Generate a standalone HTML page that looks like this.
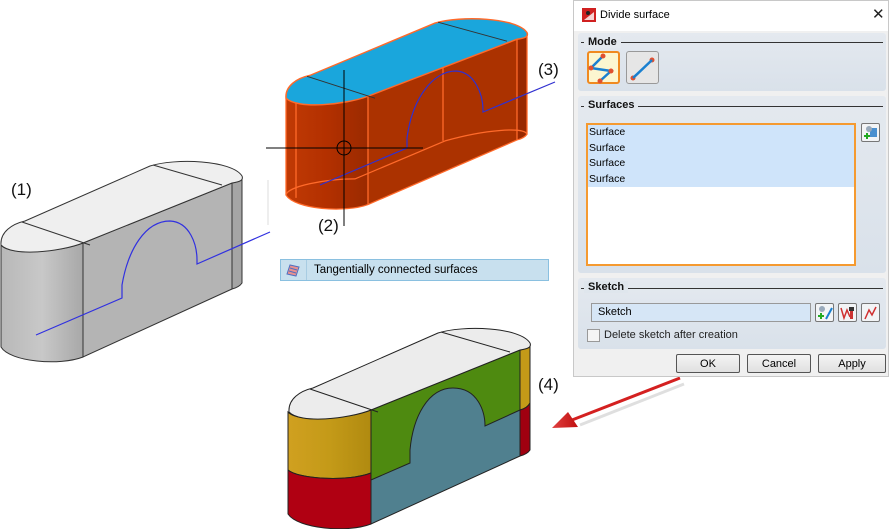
<!DOCTYPE html>
<html><head><meta charset="utf-8"><style>
body{margin:0;width:892px;height:529px;background:#fff;position:relative;overflow:hidden;font-family:"Liberation Sans",sans-serif;}
.a{position:absolute}
.lbl{font-size:17px;color:#111}
.dlg{left:573px;top:0;width:316px;height:377px;background:#f0f0f0;border:1px solid #c8c8c8;box-sizing:border-box}
.pan{position:absolute;left:4px;width:308px;background:linear-gradient(#e4e9ef,#d9e1ea);border-radius:3px}
.ph{position:absolute;left:4px;top:3px;font-size:11px;font-weight:bold;color:#111;background:inherit}
.hl{position:absolute;height:1px;background:#333}
.btn{position:absolute;top:353px;height:19px;border:1px solid #555;border-radius:2px;background:linear-gradient(#f4f4f4,#e0e0e0);font-size:11px;text-align:center;line-height:19px;box-sizing:border-box}
.ib{position:absolute;width:19px;height:19px;border:1px solid #777;border-radius:2px;background:#f2f4f6;box-sizing:border-box}
.it{height:15.5px;line-height:15.5px;font-size:10.5px;padding-left:1px;background:#cfe4fa}
</style></head><body>
<svg class="a" style="left:0;top:0" width="892" height="529">
<defs>
<linearGradient id="gc" x1="0" x2="1"><stop offset="0" stop-color="#b8b8b8"/><stop offset=".5" stop-color="#c8c8c8"/><stop offset="1" stop-color="#a8a8a8"/></linearGradient>
<linearGradient id="oc" x1="0" x2="1"><stop offset="0" stop-color="#c03a05"/><stop offset=".5" stop-color="#b33000"/><stop offset="1" stop-color="#9a2a00"/></linearGradient>
<linearGradient id="yc" x1="0" x2="1"><stop offset="0" stop-color="#d0a020"/><stop offset=".5" stop-color="#c49a18"/><stop offset="1" stop-color="#b08a10"/></linearGradient>
<linearGradient id="ar" x1="0" x2="1"><stop offset="0" stop-color="#e04040"/><stop offset="1" stop-color="#c01010"/></linearGradient>
<g id="top"><path d="M1,245 C0,232 12,224 25,221 L150,166 C175,158 232,160 242,176 C244,181 238,182 232,183 L83,243 C60,252 12,257 1,245 Z"/></g>
</defs>
<!-- gray shape -->
<g stroke="#333" stroke-width="1">
<path d="M1,245 C10,256 60,252 83,243 L83,357 C60,366 10,362 1,347 Z" fill="url(#gc)"/>
<path d="M83,243 L232,183 L232,289 L83,357 Z" fill="#b4b4b4"/>
<path d="M232,183 C238,182 243,180 242,176 L242,283 C240,286 236,288 232,289 Z" fill="#a5a5a5"/>
<use href="#top" fill="#efefef"/>
<path d="M22,222 L90,245 M153,165 L222,185" fill="none"/>
</g>
<path d="M36,335 L122,298 L122,285 C128,250 145,221 170,221 C190,222 197,245 197,260 L197,264 L270,232" fill="none" stroke="#3030e0" stroke-width="1.2"/>
<!-- orange shape -->
<g transform="translate(285,-146) scale(1,0.95)">
<g transform="translate(0,12)">
<path d="M1,245 C10,256 60,252 83,243 L83,357 C60,366 10,362 1,347 Z" fill="url(#oc)"/>
<path d="M83,243 L232,183 L232,289 L83,357 Z" fill="#ab3200"/>
<path d="M232,183 C238,182 243,180 242,176 L242,283 C240,286 236,288 232,289 Z" fill="#982800"/>
<path d="M1,347 C2,338 40,330 70,330 L160,290 C200,278 240,275 242,283" fill="none" stroke="#ff6a2a" stroke-width="1.3"/>
<path d="M1,245 L1,347 C10,362 60,366 83,357 L232,289 C236,288 240,286 242,283 L242,176 M83,243 L83,357 M232,183 L232,289 M11,235 L11,350 M158,164 L158,290" fill="none" stroke="#ff6a2a" stroke-width="1.3"/>
<use href="#top" fill="#1aa6dc" stroke="#ff6a2a" stroke-width="1.5"/>
<path d="M22,222 L90,245 M153,165 L222,185" stroke="#333" fill="none"/>
</g></g>
<path d="M320,185 L407,148 L407,138 C412,100 432,71 456,71 C475,72 483,95 483,110 L483,112 L555,82" fill="none" stroke="#3030d0" stroke-width="1.2"/>
<!-- crosshair -->
<path d="M266,148 L423,148 M344,70 L344,226" stroke="#000" stroke-width="1"/>
<circle cx="344" cy="148" r="7" fill="none" stroke="#000"/>
<!-- colored shape -->
<g transform="translate(288,167)" stroke="#222" stroke-width="1">
<path d="M0,245 C10,256 60,252 83,243 L83,306 C60,315 10,312 0,303 Z" fill="url(#yc)"/>
<path d="M0,303 C10,312 60,315 83,306 L83,357 C60,366 10,362 0,347 Z" fill="#b00012"/>
<path d="M83,243 L232,183 L232,289 L83,357 Z" fill="#50808f"/>
<path d="M83,243 L232,183 L232,243 L197,259 C197,245 190,221 165,221 C140,221 125,250 122,283 L122,296 L83,313 Z" fill="#4e8a10"/>
<path d="M232,183 C238,182 243,180 242,176 L242,236 C240,240 236,242 232,243 Z" fill="#c49a18"/>
<path d="M232,243 C236,242 240,240 242,236 L242,283 C240,286 236,288 232,289 Z" fill="#a00010"/>
<use href="#top" fill="#ececec"/>
<path d="M22,222 L90,245 M153,165 L222,185" fill="none"/>
</g>
<!-- arrow -->
<path d="M682,381 L578,422" stroke="#999" stroke-width="3" opacity=".3" transform="translate(2,3)"/>
<path d="M680,378 L572,420" stroke="#d42020" stroke-width="3"/>
<path d="M552,428 L568,412 L578,427 Z" fill="url(#ar)"/>
<path d="M268,180 L268,225" stroke="#ddd"/>
</svg>
<div class="a lbl" style="left:11px;top:180px">(1)</div>
<div class="a lbl" style="left:318px;top:216px">(2)</div>
<div class="a lbl" style="left:538px;top:60px">(3)</div>
<div class="a lbl" style="left:538px;top:375px">(4)</div>
<div class="a" style="left:280px;top:259px;width:269px;height:22px;background:#c8e0ee;border:1px solid #8ac0e0;box-sizing:border-box;font-size:11.5px;line-height:20px;padding-left:33px">Tangentially connected surfaces
<svg class="a" style="left:4px;top:3px" width="16" height="14"><path d="M2,11 L5,2 L14,4 L11,13 Z" fill="#e89090" stroke="#5070c0"/><path d="M5,5 L12,7 M4,8 L11,10" stroke="#5070c0"/></svg>
<div class="a" style="left:25px;top:0;width:1px;height:20px;background:#a8cce2"></div></div>

<div class="a dlg">
<div class="a" style="left:0;top:0;width:314px;height:30px;background:#fff"></div>
<svg class="a" style="left:8px;top:7px" width="14" height="14"><rect width="14" height="14" fill="#d02020"/><path d="M2,12 L12,4 L12,12 Z" fill="#fff" opacity=".8"/><circle cx="6" cy="5" r="2" fill="#222"/></svg>
<div class="a" style="left:26px;top:8px;font-size:11px">Divide surface</div>
<div class="a" style="left:298px;top:4px;font-size:15px;color:#222">✕</div>
<div class="pan" style="top:32px;height:58px">
<div class="hl" style="left:3px;right:3px;top:9px"></div><div class="ph" style="padding:0 4px;left:6px;background:#e4e9ef">Mode</div>
<div class="a" style="left:9px;top:18px;width:33px;height:33px;border:2px solid #f08a20;border-radius:3px;background:#fcf6d0;box-sizing:border-box"></div>
<div class="a" style="left:48px;top:18px;width:33px;height:33px;border:1px solid #999;border-radius:3px;background:#e6e6e6;box-sizing:border-box"></div>
<svg class="a" style="left:0;top:0" width="100" height="58"><path d="M25,23 L13,35 L33,38 L22,48" fill="none" stroke="#1a80d0" stroke-width="2.5"/><g fill="#e05030"><circle cx="25" cy="23" r="2.5"/><circle cx="13" cy="35" r="2.5"/><circle cx="33" cy="38" r="2.5"/><circle cx="22" cy="48" r="2.5"/><circle cx="74" cy="27" r="2.5"/><circle cx="55" cy="45" r="2.5"/></g><path d="M74,27 L55,45" stroke="#1a80d0" stroke-width="2.5"/></svg>
</div>
<div class="pan" style="top:95px;height:177px">
<div class="hl" style="left:3px;right:3px;top:10px"></div><div class="ph" style="padding:0 4px;left:6px;background:#e3e8ee">Surfaces</div>
<div class="a" style="left:8px;top:27px;width:270px;height:143px;border:2px solid #f59a30;background:#fff;box-sizing:border-box"><div class="it">Surface</div><div class="it">Surface</div><div class="it">Surface</div><div class="it">Surface</div></div>
<div class="ib" style="left:283px;top:27px"><svg width="17" height="17"><rect x="8" y="4" width="7" height="9" fill="#4a90d0"/><circle cx="7" cy="5" r="3" fill="#9ab"/><path d="M5,9 L5,15 M2,12 L8,12" stroke="#2a2" stroke-width="2"/></svg></div>
</div>
<div class="pan" style="top:277px;height:71px">
<div class="hl" style="left:3px;right:3px;top:10px"></div><div class="ph" style="padding:0 4px;left:6px;background:#dfe6ed">Sketch</div>
<div class="a" style="left:13px;top:25px;width:220px;height:19px;border:1px solid #999;background:#d6e6f6;box-sizing:border-box;font-size:11px;line-height:17px;padding-left:6px">Sketch</div>
<div class="ib" style="left:237px;top:25px"><svg width="17" height="17"><circle cx="6" cy="5" r="3" fill="#9ab"/><path d="M5,9 L5,15 M2,12 L8,12" stroke="#2a2" stroke-width="2"/><path d="M10,15 L16,4" stroke="#1a80d0" stroke-width="2"/></svg></div>
<div class="ib" style="left:260px;top:25px"><svg width="17" height="17"><path d="M2,4 L5,14 L8,6 L11,13" fill="none" stroke="#d03030" stroke-width="1.5"/><rect x="10" y="3" width="5" height="4" fill="#333"/><rect x="11" y="7" width="3" height="8" fill="#c33"/></svg></div>
<div class="ib" style="left:283px;top:25px"><svg width="17" height="17"><path d="M3,15 L7,6 L10,11 L14,3" fill="none" stroke="#d03030" stroke-width="1.5"/></svg></div>
<div class="a" style="left:9px;top:51px;width:11px;height:11px;border:1px solid #999;background:#f4f4f4"></div>
<div class="a" style="left:26px;top:51px;font-size:11px;color:#222">Delete sketch after creation</div>
</div>
<div class="btn" style="left:102px;width:64px">OK</div>
<div class="btn" style="left:173px;width:64px">Cancel</div>
<div class="btn" style="left:244px;width:68px">Apply</div>
</div>
</body></html>
